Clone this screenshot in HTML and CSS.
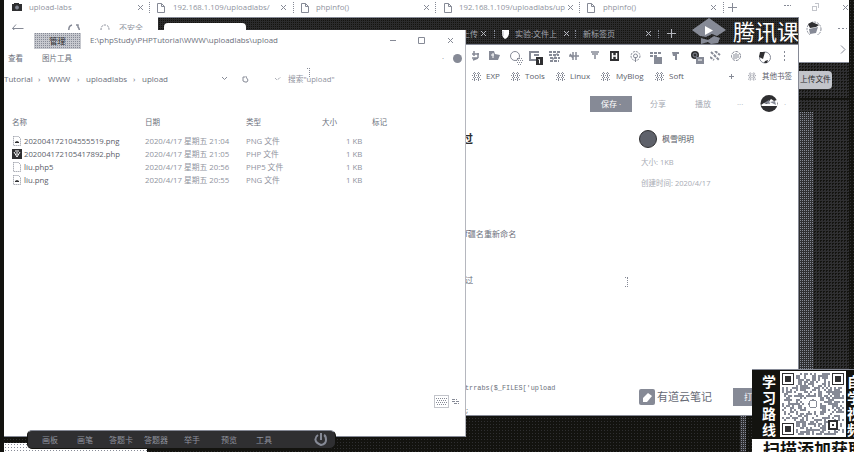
FILE: index.html
```html
<!DOCTYPE html>
<html>
<head>
<meta charset="utf-8">
<title>Desktop</title>
<link rel="stylesheet" href="styles.css">
</head>
<body>
<svg class="defs" width="0" height="0">
  <symbol id="x" viewBox="0 0 7 7"><path d="M1 1l5 5M6 1L1 6"/></symbol>
  <symbol id="page" viewBox="0 0 10 11"><path d="M1.500 1.500h4l3 3v6h-7zM5.500 1.500v3h3"/></symbol>
  <symbol id="plus" viewBox="0 0 9 9"><path d="M4.500 0v9M0 4.500h9"/></symbol>
  <symbol id="folder" viewBox="0 0 9 9"><path stroke-dasharray="1 1" d="M1 1.500h7M0 3.500h9M1 5.500h7M0 7.500h9M2.500 0v9M6.500 0v9"/></symbol>
  <symbol id="file" viewBox="0 0 10 10"><path stroke-dasharray="1 1" d="M1.500.5h5l2 2v7h-7z"/></symbol>
</svg>
<div class="desktop">
  <section class="backwin">
    <div class="tabs">
      <svg width="10" height="8"><path class="ink" d="M0 1h2V0h5v1h3v7H0z"/><circle cx="5" cy="4.500" r="1.500" fill="#868a96"/></svg>
      <span class="dim">upload-labs</span><svg width="7" height="7"><use href="#x"/></svg><i class="sep"></i>
      <svg width="10" height="11"><use href="#page"/></svg><span class="dim">192.168.1.109/uploadlabs/</span><svg width="7" height="7"><use href="#x"/></svg><i class="sep"></i>
      <svg width="10" height="11"><use href="#page"/></svg><span class="dim">phpinfo()</span><svg width="7" height="7"><use href="#x"/></svg><i class="sep"></i>
      <svg width="10" height="11"><use href="#page"/></svg><span class="dim">192.168.1.109/uploadlabs/up</span><svg width="7" height="7"><use href="#x"/></svg><i class="sep"></i>
      <svg width="10" height="11"><use href="#page"/></svg><span class="dim">phpinfo()</span><svg width="7" height="7"><use href="#x"/></svg><i class="sep"></i>
      <svg width="9" height="9"><use href="#plus"/></svg>
      <svg width="7" height="7"><path stroke-dasharray="2 1" d="M0 1.500h7"/></svg>
      <svg width="8" height="9"><path stroke-dasharray="1 1" d="M.5 3.500h4v4h-4zM3.500.5h3v5"/></svg>
      <svg width="7" height="7"><use href="#x"/></svg>
    </div>
    <div class="nav">
      <svg width="12" height="8"><path d="M4 .5L.5 4.500h11M.5 4.500L4 7.500"/></svg>
      <svg width="12" height="8"><path stroke-width="1.500" d="M1 8Q0 2 4 1M8 1h2v2Q12 5 11 8"/></svg>
      <svg width="10" height="8"><path stroke-dasharray="2 1" d="M1 6Q1 1 5 1t4 5"/></svg>
      <span class="dim">不安全</span>
      <svg width="18" height="14"><circle cx="9" cy="8" r="7" stroke-dasharray="2 1"/><path class="ink" d="M3 3l4-2 7 3-3 2-6 1z"/><path class="grey" d="M4 8l9-2-2 6-6 1z"/></svg>
      <svg width="10" height="3"><path stroke-dasharray="2 2" d="M0 1.500h9"/></svg>
    </div>
    <svg class="chev" width="6" height="9"><path d="M1 .5l4 4-4 4"/></svg>
    <div class="darkpage"><span class="upfile">上传文件</span><i class="line"></i><i class="column"></i></div>
  </section>

  <section class="chrome">
    <header class="title">
      <i class="active"></i>
      <div class="ctabs">
        <span>上传</span><svg width="7" height="7"><use href="#x"/></svg><i class="sep"></i>
        <svg width="7" height="10"><path fill="#fff" stroke="none" d="M0 1h7v4q-1 4-4 5Q0 8 0 4z"/><path d="M1 2v5"/></svg>
        <span>实验:文件上</span><svg width="7" height="7"><use href="#x"/></svg><i class="sep"></i>
        <span>新标签页</span><svg width="7" height="7"><use href="#x"/></svg><i class="sep"></i>
        <svg width="9" height="9"><use href="#plus"/></svg>
        <svg class="logo" width="36" height="27"><path class="grey" d="M18 0l17 12-9 6-5-2-6 3-6-1L1 12z"/><path class="grey" d="M10 20l7 2 6-4 6 2-2 5-7 1-3-2-7 2z"/><path fill="#fff" stroke="none" d="M14 8l8 4.500-8 4.500z"/></svg>
        <b class="brand">腾讯课</b>
      </div>
    </header>
    <div class="extensions">
      <svg width="10" height="11"><path stroke-width="1.500" d="M1 3h7M3 0v5M7 2v5M1 7h6M2 9l5-2"/></svg>
      <svg width="11" height="11"><path class="grey" d="M0 0h5l1 3 5 1-2 5H0z"/><path stroke="#fff" d="M2 4h3M4 2v5"/></svg>
      <svg width="14" height="14"><circle cx="5" cy="5" r="4.500"/><path stroke-dasharray="1 1" d="M7 7.500h6M6 9.500h7M7 11.500h6M8 13.500h4"/></svg>
      <svg width="15" height="15"><path stroke-width="2" d="M10 1H1v8h6M5 4h5"/><path class="ink" d="M7 6h7v8H7z"/><path stroke="#fff" d="M9.500 8.500h1v4"/></svg>
      <svg width="11" height="11"><path stroke-width="2" stroke-dasharray="3 1" d="M0 1h11M0 4h10M1 7h10M1 10h9"/><path d="M9 1L3 10"/></svg>
      <svg width="10" height="10"><path stroke-width="1.500" d="M0 5h10M4 1v8M7 1v8M1 3l3 4"/></svg>
      <svg width="9" height="8"><path stroke-width="1.500" d="M0 1h8M1 3h6M4 4v4"/></svg>
      <svg width="10" height="10"><path class="ink" d="M0 0h9v10H0z"/><path stroke="#fff" stroke-width="1.500" d="M2.500 2v6M6.500 2v6M2 5h5"/></svg>
      <svg width="11" height="11"><circle cx="5.500" cy="5" r="4.500" stroke-dasharray="2 1"/><circle cx="5.500" cy="5" r="2"/><path d="M5.500 6v5"/></svg>
      <svg width="14" height="14"><path stroke-width="2" stroke-dasharray="3 1" d="M0 2h11M0 5h8"/><path class="grey" d="M4 6h8v7H4z"/></svg>
      <svg width="8" height="10"><path class="grey" d="M0 1h7v2H5v6H3V5H1z"/></svg>
      <svg width="14" height="14"><circle class="ink" cx="4" cy="4" r="4"/><circle cx="4" cy="4" r="2"/><path class="grey" d="M5 6h8v7H5z"/><path stroke="#fff" d="M7 9h4"/></svg>
      <svg width="11" height="10"><path stroke-width="2" stroke-dasharray="3 1" d="M1 1l8 8M0 6l4 3M5 0l5 4"/></svg>
      <svg width="11" height="11"><circle cx="5" cy="5" r="4.500" stroke-dasharray="3 1"/><path d="M3 3v5M5 2v6M7 3v4"/></svg>
      <svg width="14" height="13"><circle cx="7" cy="6.500" r="5.500"/><path class="ink" d="M2 1h5l-2 7-4-2zM7 10l3-1-1 3-3 0z"/></svg>
      <svg width="3" height="10"><path stroke-dasharray="2 2" d="M1.500 0v10"/></svg>
    </div>
    <div class="bookmarks">
      <svg width="9" height="9"><use href="#folder"/></svg><span>EXP</span>
      <svg width="9" height="9"><use href="#folder"/></svg><span>Tools</span>
      <svg width="9" height="9"><use href="#folder"/></svg><span>Linux</span>
      <svg width="9" height="9"><use href="#folder"/></svg><span>MyBlog</span>
      <svg width="9" height="9"><use href="#folder"/></svg><span>Soft</span>
      <svg width="5" height="5"><path d="M0 2.500h5M2.500 0v5"/></svg>
      <svg width="8" height="9"><use href="#folder"/></svg><span>其他书签</span>
    </div>
    <div class="actions">
      <span class="save">保存 ·</span><span class="faint">分享</span><span class="faint">播放</span><span class="faint">···</span>
      <svg width="18" height="18"><circle class="ink" cx="9" cy="8.500" r="8.500"/><path fill="#fff" stroke="none" d="M1 10l3-2 3 1 4-5 3 2 3-1v6H2z"/><path class="grey" d="M4 8l5-3 1 4zM10 7l5-1 1 4z"/></svg><span class="faint">·</span>
    </div>
    <div class="note">
      <div class="doc">
        <b>过</b><span>f疆名重新命名</span><span>过</span><code>trrabs($_FILES['upload</code><code>;</code>
      </div>
      <svg class="ibeam" width="4" height="10"><path stroke-dasharray="1 1" d="M0 .5h3M2.500 1v8M0 9.500h3"/></svg>
      <aside>
        <div class="author"><i class="avatar"></i><span>枫雪明玥</span></div>
        <span class="meta faint">大小: 1KB</span><span class="meta faint">创建时间: 2020/4/17</span>
        <div class="youdao"><svg width="17" height="16"><rect class="grey" width="16" height="16" rx="2"/><path fill="#fff" stroke="none" d="M4 9l5-5 4 3-5 6H4z"/></svg><span>有道云笔记</span><i class="open">打</i></div>
      </aside>
    </div>
  </section>

  <section class="explorer">
    <div class="etitle"><span class="manage">管理</span><span class="path">E:\phpStudy\PHPTutorial\WWW\uploadlabs\upload</span>
      <svg width="7" height="7"><path d="M0 3.500h6"/></svg><svg width="7" height="7"><path d="M.5.5h6v6h-6z"/></svg><svg width="7" height="7"><use href="#x"/></svg></div>
    <div class="ribbon"><span>查看</span><span>图片工具</span><i>·</i><i class="help"></i></div>
    <div class="crumbs"><span>Tutorial</span><span>›</span><span>WWW</span><span>›</span><span>uploadlabs</span><span>›</span><span>upload</span>
      <svg width="5" height="4"><path d="M0 0l2.500 2.500L5 0"/></svg><svg width="7" height="7"><path d="M3 1H1v4l2 1h2l1-2-2-3V0"/></svg><svg width="6" height="5"><path stroke-dasharray="1 1" d="M0 1l2 2 4-3"/></svg><span class="dim search">搜索"upload"</span></div>
    <svg class="cursor" width="4" height="9"><path stroke-dasharray="1 1" d="M0 .5h4M2.500 0v9"/></svg>
    <div class="files">
      <div class="head"><span></span><span>名称</span><span>日期</span><span>类型</span><span>大小</span><span>标记</span></div>
      <div class="file"><svg width="10" height="10"><use href="#file"/><path class="ink" d="M3 6l2-1 2 1v1H3z"/></svg><span class="name">202004172104555519.png</span><span>2020/4/17 星期五 21:04</span><span>PNG 文件</span><span>1 KB</span></div>
      <div class="file"><svg width="10" height="10"><path class="ink" d="M0 0h10v10H0z"/><path stroke="#fff" d="M2 3l3 5 3-5M3 2h4M5 3v3"/></svg><span class="name">202004172105417892.php</span><span>2020/4/17 星期五 21:05</span><span>PHP 文件</span><span>1 KB</span></div>
      <div class="file"><svg width="10" height="10"><use href="#file"/></svg><span class="name">liu.php5</span><span>2020/4/17 星期五 20:56</span><span>PHP5 文件</span><span>1 KB</span></div>
      <div class="file"><svg width="10" height="10"><use href="#file"/><path class="ink" d="M3 6l2-1 2 1v1H3z"/></svg><span class="name">liu.png</span><span>2020/4/17 星期五 20:55</span><span>PNG 文件</span><span>1 KB</span></div>
    </div>
    <div class="views"><svg width="15" height="13"><path stroke-dasharray="1 1" d="M.5.5h14v12H.5zM2 3.500h11M3 5.500h9M2 7.500h11M3 9.500h9"/></svg><svg width="8" height="6"><path stroke-dasharray="3 1" d="M0 1.500h5M0 3.500h8M2 5.500h5"/></svg></div>
  </section>

  <i class="strip"></i><i class="post"></i>
  <div class="dock"><span>画板</span><span>画笔</span><span>答题卡</span><span>答题器</span><span>举手</span><span>预览</span><span>工具</span>
    <svg width="14" height="13"><path stroke-width="2" d="M4 2Q1 4 1.500 7t5.500 5q5-1 5-5T10 2M7 0v7"/></svg></div>

  <section class="promo">
    <b class="side">学习路线</b><svg id="qr" width="66" height="66" viewBox="0 0 33 33" shape-rendering="crispEdges"></svg><b class="side right">自学视频</b>
    <b class="foot">扫描添加获取</b>
  </section>
</div>
<script src="qr.js"></script>
</body>
</html>
```
FILE: qr.js
```js
const qr = document.getElementById('qr');
const rect = (x, y, w, h, c) => `<rect x="${x}" y="${y}" width="${w}" height="${h}" fill="${c}" stroke="none"/>`;
let out = rect(0, 0, 33, 33, '#fff'), seed = 71;
for (let y = 1; y < 32; y++) {
  for (let x = 1; x < 32; x++) {
    seed = (seed * 16807) % 2147483647;
    const finder = (x < 8 && (y < 8 || y > 24)) || (x > 24 && y < 8);
    const middle = x > 12 && x < 20 && y > 12 && y < 20;
    if (!finder && !middle && seed % 100 < 53) out += rect(x, y, 1, 1, '#868a96');
  }
}
for (const [x, y] of [[1, 1], [26, 1], [1, 26]]) {
  out += rect(x, y, 6, 6, '#2f2f31') + rect(x + .5, y + .5, 5, 5, '#fff') + rect(x + 1.5, y + 1.5, 3, 3, '#2f2f31');
}
out += rect(24, 24.5, 5, 5, '#2f2f31') + rect(25, 25.500, 3, 3, '#fff') + rect(26, 26.500, 1, 1, '#2f2f31');
out += '<circle cx="16.500" cy="16.500" r="2" stroke-width=".6"/>';
qr.innerHTML = out;
```
FILE: styles.css
```css
* { box-sizing: border-box; }
body { margin: 0; }
.desktop {
  position: relative; width: 854px; height: 452px; overflow: hidden;
  background-color: #13130f;
  background-image: radial-gradient(circle, #2f2f31 0.7px, transparent 0.8px);
  background-size: 3px 3px;
  box-shadow: inset 4px 0 #13130f;
  font: 8px/10px "Open Sans", "Noto Sans CJK SC", sans-serif;
  color: #6b6f7b; white-space: nowrap;
}
i { font-style: normal; }
svg { display: block; fill: none; stroke: #868a96; flex: none; }
.defs { position: absolute; }
.ink { fill: #2f2f31; stroke: none; }
.grey { fill: #868a96; stroke: none; }
.dim { color: #8f939e; }
.faint { color: #a8abb4; }
.sep { width: 1px; height: 11px; border-left: 1px dotted #868a96; }

/* rear browser */
.backwin { position: absolute; left: 4px; top: 0; width: 845px; height: 452px; background: #fff; overflow: hidden; clip-path: polygon(0 0, 100% 0, 100% 100%, 794px 100%, 794px 30px, 0 30px); }
.tabs {
  display: grid; height: 14px; align-items: center; padding-left: 8px; font-size: 7.8px;
  grid-template-columns: 17px 108px 12px 7px 17px 107px 13px 7px 16px 107px 12px 8px 16px 108px 12px 7px 17px 107px 13px 5px 56px 28px 30px 8px;
}
.nav { display: grid; height: 28px; align-items: center; padding-left: 8px; grid-template-columns: 56px 32px 19px 686px 33px 12px; }
.chev { margin: 3px 0 0 836px; }
.darkpage {
  margin: 8px 0 0 794px; height: 400px; width: 51px; border-top: 1px solid #868a96;
  background: #2f2f31 conic-gradient(#13130f 25%, transparent 0) 0 0 / 3px 3px;
  display: flex; flex-direction: column; align-items: flex-start;
}
.upfile { margin-top: 8px; width: 34px; height: 18px; padding: 3px 0 0 2px; border-radius: 0 4px 4px 0; background: #c2c4ca; color: #2f2f31; font-size: 7.7px; }
.line { width: 100%; height: 2px; margin-top: 9px; background: #13130f; }
.column { width: 14px; height: 259px; margin: 12px 0 0 1px; background: #2f2f31 conic-gradient(#868a96 25%, transparent 0) 0 0 / 2px 2px; }

/* front browser */
.chrome { position: absolute; left: 158px; top: 17px; width: 641px; height: 399px; background: #fff; border-top: 1px solid #868a96; border-right: 1px solid #868a96; border-bottom: 1px solid #868a96; overflow: hidden; }
.title { display: flex; height: 27px; border-bottom: 1px solid #868a96; background: #2b2b2c conic-gradient(#13130f 25%, transparent 0) 0 0 / 2px 2px; overflow: hidden; }
.active { width: 82px; height: 20px; margin: 5px 0 0 6px; border-radius: 4px 4px 0 0; background: #fff; flex: none; }
.ctabs {
  display: grid; align-items: center; padding-top: 4px; margin-left: 216px; height: 27px; width: 337px; flex: none; color: #a2a5ae;
  grid-template-columns: 18px 14px 8px 13px 48px 12px 8px 62px 13px 9px 24px 42px 66px; grid-template-rows: 23px;
}
.ctabs svg { stroke: #b6b8bf; }
.ctabs .logo { margin-top: -5px; }
.ctabs .sep { height: 8px; }
.brand { margin-top: -7px; font: 400 22px/24px "Noto Sans CJK SC", sans-serif; color: #fff; }
.extensions {
  display: grid; margin-left: 313px; height: 24px; padding-top: 6px; align-items: start;
  grid-template-columns: 18px 21px 19px 20px 20px 22px 19px 20px 20px 22px 19px 19px 21px 27px 25px 5px;
}
.bookmarks {
  display: grid; margin-left: 314px; height: 14px; align-items: center; color: #5c606b;
  grid-template-columns: 14px 25px 14px 31px 14px 31px 15px 39px 14px 60px 19px 14px 34px;
}
.bookmarks span:last-child { font-size: 7.5px; }
.actions {
  display: grid; margin: 11px 0 0 432px; height: 19px; align-items: center;
  grid-template-columns: 60px 45px 42px 23px 24px 4px;
}
.save { width: 42px; height: 16px; background: #868a96; color: #fff; text-align: center; line-height: 15px; }
.note { display: flex; height: 303px; margin-left: 307px; }
.doc { display: flex; flex-direction: column; width: 160px; }
.doc b { margin: 19px 0 0 -3px; font-size: 11px; line-height: 14px; color: #2f2f31; }
.doc span { margin: 83px 0 0; font-size: 8.1px; line-height: 10px; }
.doc span + span { margin-top: 36px; }
.doc code { margin-top: 99px; font: 6.85px/9px "Liberation Mono", monospace; }
.doc code + code { margin-top: 14px; }
.ibeam { margin-top: 164px; }
aside { display: flex; flex-direction: column; margin-left: 10px; width: 159px; }
.author { display: flex; align-items: center; gap: 5px; margin-top: 17px; height: 18px; color: #555963; }
.avatar { width: 18px; height: 18px; border-radius: 9px; border: 1px solid #2f2f31; background: #5f626b; }
.meta { margin-top: 9px; padding-left: 2px; font-size: 7.5px; }
.meta + .meta { margin-top: 11px; }
.youdao { display: flex; align-items: center; margin-top: 200px; height: 18px; font-size: 11px; }
.youdao span { width: 77px; padding-left: 1px; color: #666a75; }
.open { height: 18px; width: 60px; padding-left: 11px; background: #868a96; color: #fff; font-size: 8px; line-height: 18px; }

/* file explorer */
.explorer { position: absolute; left: 4px; top: 30px; width: 462px; height: 407px; background: #fff; border-bottom: 1px solid #868a96; }
.explorer { border-right: 1px solid #b5b7be; }
.etitle { display: grid; height: 20px; align-items: center; grid-template-columns: 30px 56px 300px 28px 29px 10px; }
.manage { grid-column: 2; width: 47px; height: 16px; margin-top: 2px; text-align: center; line-height: 16px; color: #2f2f31; background: #c6c8ce conic-gradient(#868a96 25%, transparent 0) 0 0 / 2px 2px; }
.path { font-size: 7.9px; }
.ribbon { display: grid; height: 16px; align-items: center; padding: 0 0 0 4px; grid-template-columns: 34px 400px 11px 9px; font-size: 7.5px; }
.help { width: 9px; height: 9px; border-radius: 5px; background: #868a96; }
.crumbs { display: grid; height: 26px; align-items: center; grid-template-columns: 34px 10px 29px 9px 47px 9px 80px 20px 33px 13px 70px; }
.search { font-size: 7.7px; }
.cursor { position: absolute; left: 303px; top: 38px; }
.files { display: flex; flex-direction: column; }
.head { display: grid; height: 36px; padding-top: 25px; grid-template-columns: 8px 133px 101px 76px 50px 30px; font-size: 7.5px; }
.head { margin-bottom: 6px; }
.file { display: grid; height: 13.2px; align-items: center; padding-left: 8px; grid-template-columns: 12px 121px 101px 100px 30px; color: #8f939e; font-size: 7.8px; }
.name { color: #5a5e69; font-size: 7.75px; }
.views { display: flex; gap: 3px; align-items: center; margin: 208px 0 0 430px; }

/* call toolbar and lower edge */
.strip { position: absolute; left: 4px; top: 443px; width: 143px; height: 9px; background: #fff radial-gradient(circle, #868a96 0.7px, transparent 0.8px) 0 0 / 3px 3px; }
.post { position: absolute; left: 740px; top: 416px; width: 6px; height: 36px; background: #2f2f31 conic-gradient(#868a96 25%, transparent 0) 0 0 / 2px 2px; }
.dock {
  position: absolute; left: 27px; top: 430px; width: 309px; height: 19px; padding-left: 14px;
  display: grid; align-items: center; grid-template-columns: 35px 32px 35px 40px 37px 35px 58px 14px;
  border: 1px solid #13130f; border-top-color: #868a96; border-radius: 5px 6px 6px 5px;
  background: #2f2f31; color: #8f939e;
}

/* promotion card */
.promo {
  position: absolute; left: 752px; top: 369px; width: 102px; height: 83px; background: #13130f; border-top: 1px solid #868a96;
  display: grid; grid-template-columns: 28px 66px 30px; grid-template-rows: 69px 18px; overflow: hidden;
}
.promo svg { margin-top: 1px; }
.side { width: 14px; height: 64px; margin: 3px 0 0 10px; white-space: normal; font: 700 14px/16px "Noto Sans CJK SC", sans-serif; color: #fff; }
.side.right { margin-left: 1px; }
.foot { grid-column: 1 / -1; padding-left: 11px; background: #fff; color: #13130f; font: 700 17px/19px "Noto Sans CJK SC", sans-serif; }
```
